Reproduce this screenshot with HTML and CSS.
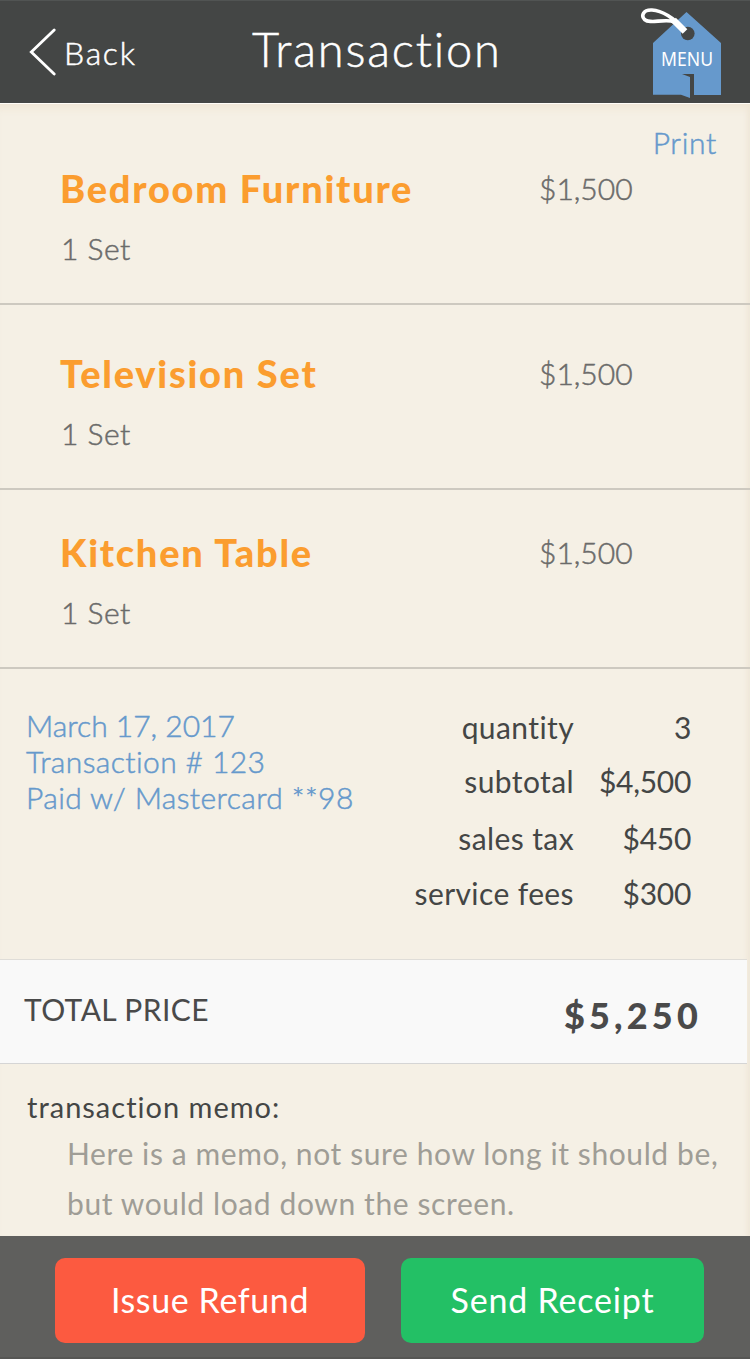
FILE: index.html
```
<!DOCTYPE html>
<html lang="en">
<head>
    <meta charset="UTF-8">
    <meta name="viewport" content="width=device-width, initial-scale=1.0">
    <title>Transaction</title>
    <link rel="stylesheet" href="styles.css">
</head>
<body>

<header class="topbar">
    <a class="back" href="#">
        <svg width="28" height="50" viewBox="0 0 28 50" fill="none" stroke="#fff" stroke-width="2.8">
            <path d="M26.2 3 L3.3 25 L26.2 47" stroke-linecap="round"/>
        </svg>
        <span>Back</span>
    </a>
    <h1>Transaction</h1>
    <a class="menu" href="#" aria-label="Menu">
        <svg width="86" height="96" viewBox="0 0 86 96">
            <path d="M46.5 9 L81 40 V92 H54 V71 H42 L50 74 V95 L41 91.7 H13 V40 Z" fill="#6699cc"/>
            <circle cx="47.8" cy="30.5" r="6.8" fill="#444645"/>
            <path d="M43 25.500 C34 15 22 7.5 12 7 C3 6.500 1 13 4.500 16.500 C10 21 20 16.500 31 18 C37 19 40 22 43 27" fill="none" stroke="#fff" stroke-width="3.6"/>
            <path d="M33.500 17 L45 28.500" stroke="#fff" stroke-width="6.500"/>
            <text class="menu-text" x="47" y="62.500" text-anchor="middle" textLength="52" lengthAdjust="spacingAndGlyphs">MENU</text>
        </svg>
    </a>
</header>

<main class="page">
    <a class="print" href="#">Print</a>

    <section class="item first">
        <div>
            <h2>Bedroom Furniture</h2>
            <p>1 Set</p>
        </div>
        <span class="price">$1,500</span>
    </section>
    <section class="item second">
        <div>
            <h2>Television Set</h2>
            <p>1 Set</p>
        </div>
        <span class="price">$1,500</span>
    </section>
    <section class="item third">
        <div>
            <h2>Kitchen Table</h2>
            <p>1 Set</p>
        </div>
        <span class="price">$1,500</span>
    </section>

    <section class="summary">
        <div class="info">
            <div class="date">March 17, 2017</div>
            <div>Transaction # 123</div>
            <div>Paid w/ Mastercard **98</div>
        </div>
        <dl class="costs">
            <dt>quantity</dt><dd>3</dd>
            <dt>subtotal</dt><dd>$4,500</dd>
            <dt>sales tax</dt><dd>$450</dd>
            <dt>service fees</dt><dd>$300</dd>
        </dl>
    </section>

    <section class="total">
        <span class="total-label">TOTAL PRICE</span>
        <span class="total-value">$5,250</span>
    </section>

    <section class="memo">
        <h3>transaction memo:</h3>
        <p>Here is a memo, not sure how long it should be,<br>but would load down the screen.</p>
    </section>
</main>

<footer class="actions">
    <button class="refund" type="button">Issue Refund</button>
    <button class="receipt" type="button">Send Receipt</button>
</footer>

</body>
</html>
```
FILE: styles.css
```
* {
    box-sizing: border-box;
}
body {
    margin: 0;
    width: 750px;
    font-family: Lato, "Open Sans", sans-serif;
    font-size: 30px;
    line-height: 36px;
    color: #444645;
    background-color: #f5f0e5;
}
h1, h2, h3, p, dl, dd {
    margin: 0;
}
a {
    text-decoration: none;
}
/* thicken the light weight a little */
.back span, .topbar h1, .print, .item p, .price, .info {
    font-weight: 300;
    -webkit-text-stroke: 0.5px currentColor;
}
.topbar {
    display: grid;
    grid-template-columns: 223px 1fr 110px;
    height: 103px;
    background-color: #444645;
    border-top: 1px solid #515453;
    color: #fff;
}
.back {
    display: flex;
    align-items: flex-start;
    gap: 8px;
    padding: 26px 0 0 28px;
    color: #fff;
    font-size: 32px;
    letter-spacing: 1.7px;
}
.back span {
    padding-top: 8px;
}
.topbar h1 {
    padding: 20px 0 0 29px;
    font-size: 47px;
    line-height: 56px;
    letter-spacing: 1.8px;
}
.menu {
    padding-top: 2px;
}
.menu svg {
    display: block;
}
.menu-text {
    font-family: "Noto Sans", sans-serif;
    font-size: 19.5px;
    fill: #fff;
}
.page {
    position: relative;
    height: 1133px;
    box-shadow: inset 0 10px 8px -6px #efe5d4, inset -6px 0 5px -3px #efe7d8;
    border-top: 1px solid #fffdf8;
}
/* sits above the first item's row */
.print {
    position: absolute;
    top: 20px;
    right: 33px;
    color: #6699cc;
    letter-spacing: 0.7px;
}
.item {
    display: grid;
    grid-template-columns: 478px 1fr;
    padding-left: 61px;
    border-bottom: 2px solid #cdc9c0;
    color: #6b6b6a;
}
.first {
    height: 201px;
    padding-top: 61px;
}
.second {
    height: 185px;
    padding-top: 45px;
}
.third {
    height: 179px;
    padding-top: 39px;
}
.item h2 {
    margin-left: -1px;
    font-size: 38px;
    font-weight: 900;
    line-height: 46px;
    color: #fb9d2f;
    letter-spacing: 1.75px;
}
.item p {
    margin-top: 19px;
    letter-spacing: 0.5px;
}
.price {
    padding-top: 5px;
}
.summary {
    display: flex;
    justify-content: space-between;
    height: 290px;
    padding: 38px 59px 0 26px;
}
.info {
    color: #6699cc;
    white-space: nowrap;
    letter-spacing: 0.4px;
}
.date {
    letter-spacing: 0;
}
.costs {
    display: grid;
    grid-template-columns: auto 92px;
    grid-template-rows: 54px 57px 55px 55px;
    column-gap: 25px;
    padding-top: 2px;
    text-align: right;
    white-space: nowrap;
    letter-spacing: 0.4px;
}
.costs dd {
    letter-spacing: -0.3px;
}
.total {
    display: flex;
    justify-content: space-between;
    width: 747px;
    height: 105px;
    padding: 31px 45px 0 24px;
    background-color: #f9f9f9;
    border-top: 1px solid #dfddd8;
    border-bottom: 1px solid #d5d5d5;
    color: #4a4a4a;
}
.total-label {
    letter-spacing: 0.4px;
}
.total-value {
    padding-top: 2px;
    font-size: 36px;
    font-weight: 900;
    line-height: 44px;
    letter-spacing: 4.2px;
}
.memo {
    padding: 25px 0 0 27px;
}
.memo h3 {
    font-size: 29px;
    font-weight: 400;
    letter-spacing: 1px;
}
.memo p {
    padding: 3px 0 0 40px;
    line-height: 50px;
    color: #9f9d96;
    white-space: nowrap;
    letter-spacing: 0.6px;
}
.actions {
    display: flex;
    gap: 36px;
    height: 123px;
    padding: 22px 0 0 55px;
    background-color: #5f5f5d;
    border-bottom: 2px solid #565654;
}
.actions button {
    height: 85px;
    padding: 0 0 2px;
    border: 0;
    border-radius: 10px;
    color: #fff;
    font-family: inherit;
    font-size: 34px;
    letter-spacing: 0.6px;
}
.actions .refund {
    width: 310px;
    background-color: #fc5a40;
}
.actions .receipt {
    width: 303px;
    background-color: #23c065;
    letter-spacing: 0.8px;
}
```
